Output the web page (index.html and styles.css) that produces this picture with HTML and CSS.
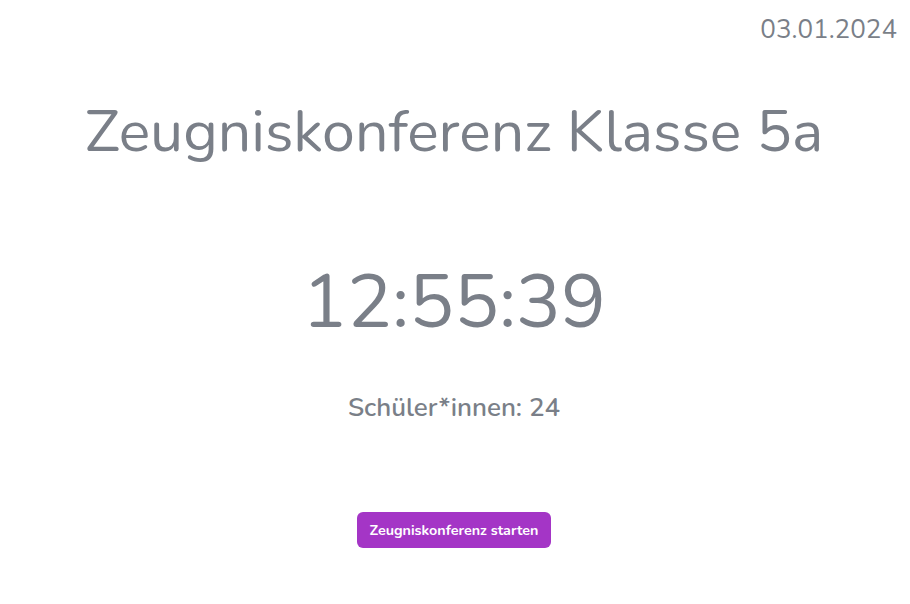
FILE: index.html
```html
<!DOCTYPE html>
<html lang="de">
<head>
<meta charset="utf-8">
<title>Zeugniskonferenz</title>
<link rel="stylesheet" href="styles.css">
</head>
<body>
<div class="page">
  <header class="topbar"><span class="date">03.01.2024</span></header>
  <main class="content">
    <h1 class="title">Zeugniskonferenz Klasse 5a</h1>
    <div class="clock">12:55:39</div>
    <div class="count">Schüler*innen: 24</div>
    <button class="start">Zeugniskonferenz starten</button>
  </main>
</div>
</body>
</html>
```
FILE: styles.css
```css
html, body {
  margin: 0;
  padding: 0;
  background: #ffffff;
}
body {
  font-family: "Nunito", "Lato", "Open Sans", sans-serif;
  color: #7a7f88;
}
.page {
  width: 908px;
  height: 604px;
  display: flex;
  flex-direction: column;
}
.topbar {
  display: flex;
  justify-content: flex-end;
  padding: 12px 11px 0 0;
  height: 36px;
}
.date {
  font-size: 26px;
  line-height: 36px;
}
.content {
  display: flex;
  flex-direction: column;
  align-items: center;
}
.title {
  margin: 44px 0 0 0;
  font-weight: 400;
  font-size: 59px;
  line-height: 80px;
}
.clock {
  margin-top: 85px;
  font-size: 75px;
  line-height: 90px;
}
.count {
  margin-top: 44px;
  font-size: 26px;
  font-weight: 600;
  line-height: 34px;
}
.start {
  margin-top: 87px;
  background: #a435c6;
  color: #ffffff;
  border: none;
  border-radius: 6px;
  font-family: inherit;
  font-weight: 700;
  font-size: 14.3px;
  width: 194px;
  height: 36px;
  padding: 0;
}
```
